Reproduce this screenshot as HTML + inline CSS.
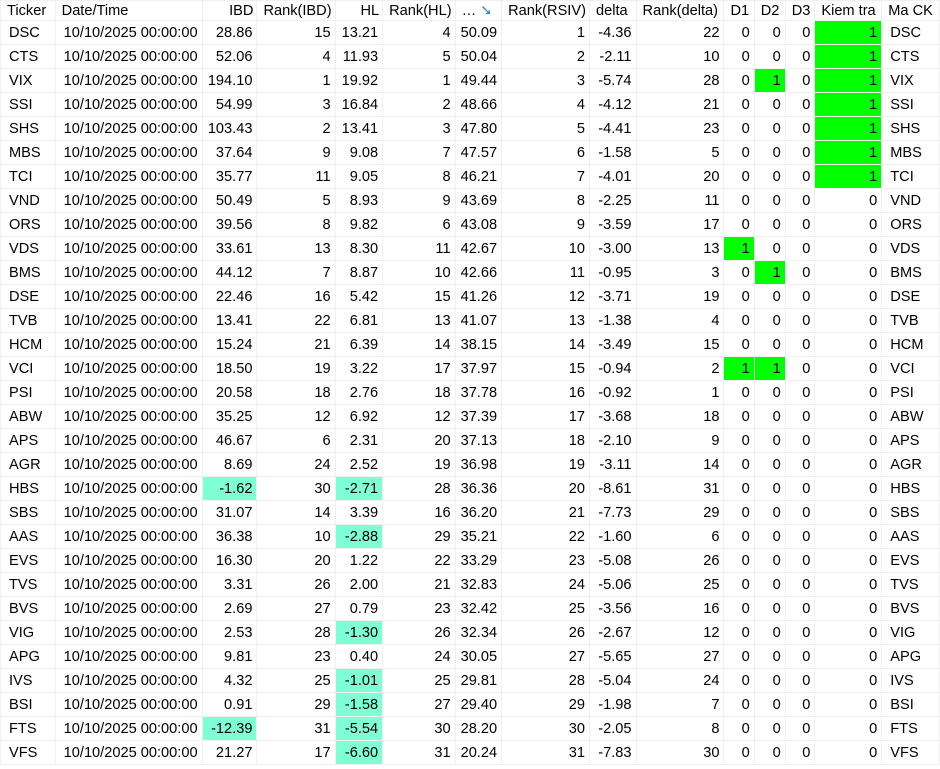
<!DOCTYPE html>
<html><head><meta charset="utf-8"><style>
html,body{margin:0;padding:0;background:#fff;width:940px;height:769px;overflow:hidden}
table{border-collapse:collapse;table-layout:fixed;font-family:"Liberation Sans",sans-serif;font-size:14.6px;color:#000}
td,th{border:1px solid #f0f0f0;padding:0 4px 0 5px;height:23px;line-height:22px;white-space:nowrap;overflow:hidden;font-weight:normal}
th{height:19px;line-height:18px;text-align:left;padding:0 3px 0 6px}
td{text-align:right}
td.l{text-align:left;padding-left:8px}
th.r{text-align:right}
.g{background:#00ff00}
.a{background:#7fffd4}
</style></head><body>
<table>
<colgroup><col style="width:57px"><col style="width:146px"><col style="width:55px"><col style="width:76px"><col style="width:48px"><col style="width:72px"><col style="width:46px"><col style="width:83px"><col style="width:48px"><col style="width:89px"><col style="width:31px"><col style="width:32px"><col style="width:30px"><col style="width:68px"><col style="width:59px"></colgroup>
<tr><th>Ticker</th><th>Date/Time</th><th class="r">IBD</th><th>Rank(IBD)</th><th class="r">HL</th><th>Rank(HL)</th><th>… <span style="color:#2a8fd8">➘</span></th><th>Rank(RSIV)</th><th>delta</th><th>Rank(delta)</th><th>D1</th><th>D2</th><th>D3</th><th>Kiem tra</th><th>Ma CK</th></tr>
<tr><td class="l">DSC</td><td class="l">10/10/2025 00:00:00</td><td>28.86</td><td>15</td><td>13.21</td><td>4</td><td>50.09</td><td>1</td><td>-4.36</td><td>22</td><td>0</td><td>0</td><td>0</td><td class="g">1</td><td class="l">DSC</td></tr>
<tr><td class="l">CTS</td><td class="l">10/10/2025 00:00:00</td><td>52.06</td><td>4</td><td>11.93</td><td>5</td><td>50.04</td><td>2</td><td>-2.11</td><td>10</td><td>0</td><td>0</td><td>0</td><td class="g">1</td><td class="l">CTS</td></tr>
<tr><td class="l">VIX</td><td class="l">10/10/2025 00:00:00</td><td>194.10</td><td>1</td><td>19.92</td><td>1</td><td>49.44</td><td>3</td><td>-5.74</td><td>28</td><td>0</td><td class="g">1</td><td>0</td><td class="g">1</td><td class="l">VIX</td></tr>
<tr><td class="l">SSI</td><td class="l">10/10/2025 00:00:00</td><td>54.99</td><td>3</td><td>16.84</td><td>2</td><td>48.66</td><td>4</td><td>-4.12</td><td>21</td><td>0</td><td>0</td><td>0</td><td class="g">1</td><td class="l">SSI</td></tr>
<tr><td class="l">SHS</td><td class="l">10/10/2025 00:00:00</td><td>103.43</td><td>2</td><td>13.41</td><td>3</td><td>47.80</td><td>5</td><td>-4.41</td><td>23</td><td>0</td><td>0</td><td>0</td><td class="g">1</td><td class="l">SHS</td></tr>
<tr><td class="l">MBS</td><td class="l">10/10/2025 00:00:00</td><td>37.64</td><td>9</td><td>9.08</td><td>7</td><td>47.57</td><td>6</td><td>-1.58</td><td>5</td><td>0</td><td>0</td><td>0</td><td class="g">1</td><td class="l">MBS</td></tr>
<tr><td class="l">TCI</td><td class="l">10/10/2025 00:00:00</td><td>35.77</td><td>11</td><td>9.05</td><td>8</td><td>46.21</td><td>7</td><td>-4.01</td><td>20</td><td>0</td><td>0</td><td>0</td><td class="g">1</td><td class="l">TCI</td></tr>
<tr><td class="l">VND</td><td class="l">10/10/2025 00:00:00</td><td>50.49</td><td>5</td><td>8.93</td><td>9</td><td>43.69</td><td>8</td><td>-2.25</td><td>11</td><td>0</td><td>0</td><td>0</td><td>0</td><td class="l">VND</td></tr>
<tr><td class="l">ORS</td><td class="l">10/10/2025 00:00:00</td><td>39.56</td><td>8</td><td>9.82</td><td>6</td><td>43.08</td><td>9</td><td>-3.59</td><td>17</td><td>0</td><td>0</td><td>0</td><td>0</td><td class="l">ORS</td></tr>
<tr><td class="l">VDS</td><td class="l">10/10/2025 00:00:00</td><td>33.61</td><td>13</td><td>8.30</td><td>11</td><td>42.67</td><td>10</td><td>-3.00</td><td>13</td><td class="g">1</td><td>0</td><td>0</td><td>0</td><td class="l">VDS</td></tr>
<tr><td class="l">BMS</td><td class="l">10/10/2025 00:00:00</td><td>44.12</td><td>7</td><td>8.87</td><td>10</td><td>42.66</td><td>11</td><td>-0.95</td><td>3</td><td>0</td><td class="g">1</td><td>0</td><td>0</td><td class="l">BMS</td></tr>
<tr><td class="l">DSE</td><td class="l">10/10/2025 00:00:00</td><td>22.46</td><td>16</td><td>5.42</td><td>15</td><td>41.26</td><td>12</td><td>-3.71</td><td>19</td><td>0</td><td>0</td><td>0</td><td>0</td><td class="l">DSE</td></tr>
<tr><td class="l">TVB</td><td class="l">10/10/2025 00:00:00</td><td>13.41</td><td>22</td><td>6.81</td><td>13</td><td>41.07</td><td>13</td><td>-1.38</td><td>4</td><td>0</td><td>0</td><td>0</td><td>0</td><td class="l">TVB</td></tr>
<tr><td class="l">HCM</td><td class="l">10/10/2025 00:00:00</td><td>15.24</td><td>21</td><td>6.39</td><td>14</td><td>38.15</td><td>14</td><td>-3.49</td><td>15</td><td>0</td><td>0</td><td>0</td><td>0</td><td class="l">HCM</td></tr>
<tr><td class="l">VCI</td><td class="l">10/10/2025 00:00:00</td><td>18.50</td><td>19</td><td>3.22</td><td>17</td><td>37.97</td><td>15</td><td>-0.94</td><td>2</td><td class="g">1</td><td class="g">1</td><td>0</td><td>0</td><td class="l">VCI</td></tr>
<tr><td class="l">PSI</td><td class="l">10/10/2025 00:00:00</td><td>20.58</td><td>18</td><td>2.76</td><td>18</td><td>37.78</td><td>16</td><td>-0.92</td><td>1</td><td>0</td><td>0</td><td>0</td><td>0</td><td class="l">PSI</td></tr>
<tr><td class="l">ABW</td><td class="l">10/10/2025 00:00:00</td><td>35.25</td><td>12</td><td>6.92</td><td>12</td><td>37.39</td><td>17</td><td>-3.68</td><td>18</td><td>0</td><td>0</td><td>0</td><td>0</td><td class="l">ABW</td></tr>
<tr><td class="l">APS</td><td class="l">10/10/2025 00:00:00</td><td>46.67</td><td>6</td><td>2.31</td><td>20</td><td>37.13</td><td>18</td><td>-2.10</td><td>9</td><td>0</td><td>0</td><td>0</td><td>0</td><td class="l">APS</td></tr>
<tr><td class="l">AGR</td><td class="l">10/10/2025 00:00:00</td><td>8.69</td><td>24</td><td>2.52</td><td>19</td><td>36.98</td><td>19</td><td>-3.11</td><td>14</td><td>0</td><td>0</td><td>0</td><td>0</td><td class="l">AGR</td></tr>
<tr><td class="l">HBS</td><td class="l">10/10/2025 00:00:00</td><td class="a">-1.62</td><td>30</td><td class="a">-2.71</td><td>28</td><td>36.36</td><td>20</td><td>-8.61</td><td>31</td><td>0</td><td>0</td><td>0</td><td>0</td><td class="l">HBS</td></tr>
<tr><td class="l">SBS</td><td class="l">10/10/2025 00:00:00</td><td>31.07</td><td>14</td><td>3.39</td><td>16</td><td>36.20</td><td>21</td><td>-7.73</td><td>29</td><td>0</td><td>0</td><td>0</td><td>0</td><td class="l">SBS</td></tr>
<tr><td class="l">AAS</td><td class="l">10/10/2025 00:00:00</td><td>36.38</td><td>10</td><td class="a">-2.88</td><td>29</td><td>35.21</td><td>22</td><td>-1.60</td><td>6</td><td>0</td><td>0</td><td>0</td><td>0</td><td class="l">AAS</td></tr>
<tr><td class="l">EVS</td><td class="l">10/10/2025 00:00:00</td><td>16.30</td><td>20</td><td>1.22</td><td>22</td><td>33.29</td><td>23</td><td>-5.08</td><td>26</td><td>0</td><td>0</td><td>0</td><td>0</td><td class="l">EVS</td></tr>
<tr><td class="l">TVS</td><td class="l">10/10/2025 00:00:00</td><td>3.31</td><td>26</td><td>2.00</td><td>21</td><td>32.83</td><td>24</td><td>-5.06</td><td>25</td><td>0</td><td>0</td><td>0</td><td>0</td><td class="l">TVS</td></tr>
<tr><td class="l">BVS</td><td class="l">10/10/2025 00:00:00</td><td>2.69</td><td>27</td><td>0.79</td><td>23</td><td>32.42</td><td>25</td><td>-3.56</td><td>16</td><td>0</td><td>0</td><td>0</td><td>0</td><td class="l">BVS</td></tr>
<tr><td class="l">VIG</td><td class="l">10/10/2025 00:00:00</td><td>2.53</td><td>28</td><td class="a">-1.30</td><td>26</td><td>32.34</td><td>26</td><td>-2.67</td><td>12</td><td>0</td><td>0</td><td>0</td><td>0</td><td class="l">VIG</td></tr>
<tr><td class="l">APG</td><td class="l">10/10/2025 00:00:00</td><td>9.81</td><td>23</td><td>0.40</td><td>24</td><td>30.05</td><td>27</td><td>-5.65</td><td>27</td><td>0</td><td>0</td><td>0</td><td>0</td><td class="l">APG</td></tr>
<tr><td class="l">IVS</td><td class="l">10/10/2025 00:00:00</td><td>4.32</td><td>25</td><td class="a">-1.01</td><td>25</td><td>29.81</td><td>28</td><td>-5.04</td><td>24</td><td>0</td><td>0</td><td>0</td><td>0</td><td class="l">IVS</td></tr>
<tr><td class="l">BSI</td><td class="l">10/10/2025 00:00:00</td><td>0.91</td><td>29</td><td class="a">-1.58</td><td>27</td><td>29.40</td><td>29</td><td>-1.98</td><td>7</td><td>0</td><td>0</td><td>0</td><td>0</td><td class="l">BSI</td></tr>
<tr><td class="l">FTS</td><td class="l">10/10/2025 00:00:00</td><td class="a">-12.39</td><td>31</td><td class="a">-5.54</td><td>30</td><td>28.20</td><td>30</td><td>-2.05</td><td>8</td><td>0</td><td>0</td><td>0</td><td>0</td><td class="l">FTS</td></tr>
<tr><td class="l">VFS</td><td class="l">10/10/2025 00:00:00</td><td>21.27</td><td>17</td><td class="a">-6.60</td><td>31</td><td>20.24</td><td>31</td><td>-7.83</td><td>30</td><td>0</td><td>0</td><td>0</td><td>0</td><td class="l">VFS</td></tr>
</table>
</body></html>
